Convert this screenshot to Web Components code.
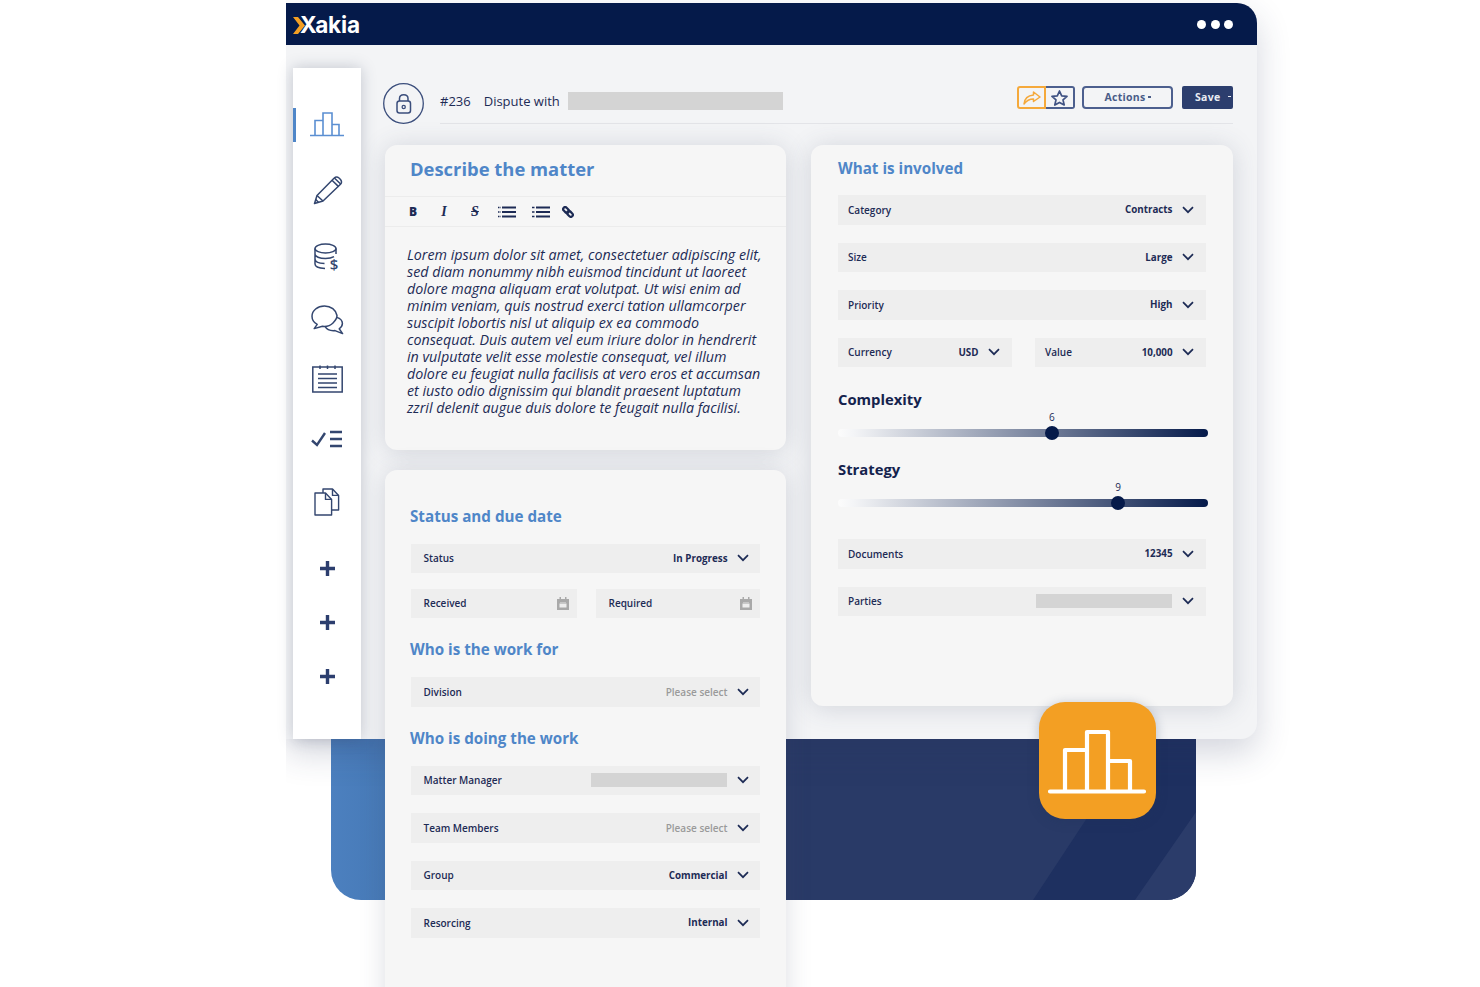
<!DOCTYPE html>
<html lang="en">
<head>
<meta charset="utf-8">
<title>Xakia matter</title>
<style>
  html, body { margin: 0; background: #fff; }
  body { font-family: "Open Sans", "Noto Sans", sans-serif; color: #1d2b55; }
</style>
</head>
<body>
<matter-stage>
  <back-panel></back-panel>
  <app-window>
    <top-bar slot="top"></top-bar>
    <side-nav slot="nav">
      <nav-item active style="margin-top:44px">
        <svg width="34" height="25" viewBox="0 0 34 25" fill="none" stroke="#5b8fd2" stroke-width="1.6"><path d="M0 23.5H34M5 23.5V8.5H13V23.5M13 8.5V1H22V23.5M22 12.5H29V23.5"/></svg>
      </nav-item>
      <nav-item style="margin-top:38px">
        <svg width="30" height="30" viewBox="0 0 30 30" fill="none" stroke="#33466f" stroke-width="1.5" stroke-linejoin="round" style="margin-left:2px"><path d="M1.5 28.5L4 20.5L21 3.2Q23.5 1 26 3L27.5 4.5Q29.5 7 27.5 9.3L10 26Z"/><path d="M4 20.5L10 26M19 5.2L25.6 11.6M21.4 3L27.6 9M2.8 24.4L5.6 27.4"/></svg>
      </nav-item>
      <nav-item style="margin-top:38px">
        <svg width="27" height="32" viewBox="0 0 27 32" fill="none" stroke="#33466f" stroke-width="1.5"><ellipse cx="11.5" cy="5.5" rx="10.5" ry="4.5"/><path d="M1 5.5V21C1 23.5 5 25.2 11 25.5M1 11C1 13.5 5.5 15.5 11.5 15.5C15 15.5 18 14.8 20 13.6M1 16C1 18.4 5 20.3 10.5 20.6M22 5.5V11"/><text x="20" y="26.5" text-anchor="middle" font-family="Open Sans" font-size="15" font-weight="600" fill="#33466f" stroke="none">$</text></svg>
      </nav-item>
      <nav-item style="margin-top:30px">
        <svg width="33" height="30" viewBox="0 0 33 30" fill="none" stroke="#33466f" stroke-width="1.5" stroke-linejoin="round" style="margin-left:1px"><path d="M13.5 1C6.5 1 1 5.6 1 11.2C1 14.6 3 17.6 6.2 19.4L3.2 23.6L11.5 21.3C16 21.8 20 20 22 18C25 15 26 12.5 26 10.5C25 5 20 1 13.5 1Z"/><path d="M25.8 12.4C29.2 13.4 31.4 15.8 31.4 18.6C31.4 20.8 30 22.6 28.2 23.8L31.6 28.6L24 25.6C19.6 26 15.6 24.2 14 21.4"/></svg>
      </nav-item>
      <nav-item style="margin-top:30px">
        <svg width="31" height="28" viewBox="0 0 31 28" fill="none" stroke="#33466f" stroke-width="1.5" style="margin-left:1px"><path d="M.8 2H30.2V27H.8Z" /><path d="M8 .5V4M15.5 .5V4M23 .5V4" /><path d="M6 9H25M6 13.5H25M6 18H25M6 22.5H25" stroke-width="1.7"/></svg>
      </nav-item>
      <nav-item style="margin-top:37px">
        <svg width="32" height="18" viewBox="0 0 32 18" fill="none" stroke="#33466f"><path d="M1 10.5L6 15L14 3" stroke-width="2.4"/><path d="M19 2H31M19 9H31M19 16H31" stroke-width="2.6"/></svg>
      </nav-item>
      <nav-item style="margin-top:40px">
        <svg width="26" height="28" viewBox="0 0 26 28" fill="none" stroke="#33466f" stroke-width="1.4" stroke-linejoin="round"><path d="M1 5H11.5L17.6 11.4V27H1Z"/><path d="M11.5 5V11.4H17.6"/><path d="M9 5V1H18.5L24.6 7.4V22H17.6"/><path d="M18.5 1V7.4H24.6"/></svg>
      </nav-item>
      <nav-item style="margin-top:45px"><plus-mark></plus-mark></nav-item>
      <nav-item style="margin-top:39px"><plus-mark></plus-mark></nav-item>
      <nav-item style="margin-top:39px"><plus-mark></plus-mark></nav-item>
    </side-nav>
    <matter-head slot="head" num="#236" title-text="Dispute with"></matter-head>

    <form-card slot="left" style="height:305px">
      <editor-pane heading="Describe the matter">Lorem ipsum dolor sit amet, consectetuer adipiscing elit,<br>sed diam nonummy nibh euismod tincidunt ut laoreet<br>dolore magna aliquam erat volutpat. Ut wisi enim ad<br>minim veniam, quis nostrud exerci tation ullamcorper<br>suscipit lobortis nisl ut aliquip ex ea commodo<br>consequat. Duis autem vel eum iriure dolor in hendrerit<br>in vulputate velit esse molestie consequat, vel illum<br>dolore eu feugiat nulla facilisis at vero eros et accumsan<br>et iusto odio dignissim qui blandit praesent luptatum<br>zzril delenit augue duis dolore te feugait nulla facilisi.</editor-pane>
    </form-card>
    <form-card slot="left" pad="35.6px 26px 0" style="height:640px;--row-l:12.5px;--row-r:11px">
      <card-title flush>Status and due date</card-title>
      <select-row label="Status">In Progress</select-row>
      <field-pair cols="166px 164px" gap="19px" style="margin-top:15.5px">
        <date-field label="Received"></date-field>
        <date-field label="Required"></date-field>
      </field-pair>
      <card-title>Who is the work for</card-title>
      <select-row label="Division" muted>Please select</select-row>
      <card-title>Who is doing the work</card-title>
      <select-row label="Matter Manager" strong blank></select-row>
      <select-row label="Team Members" strong muted style="margin-top:18px">Please select</select-row>
      <select-row label="Group" strong style="margin-top:18px">Commercial</select-row>
      <select-row label="Resorcing" strong style="margin-top:18px">Internal</select-row>
    </form-card>

    <form-card slot="right" pad="13px 27px 0" style="height:561px;--row-l:10px;--row-r:12px">
      <card-title first>What is involved</card-title>
      <select-row label="Category">Contracts</select-row>
      <select-row label="Size" style="margin-top:18px">Large</select-row>
      <select-row label="Priority" style="margin-top:18px">High</select-row>
      <field-pair cols="174px 171px" gap="23px" style="margin-top:18px">
        <select-row label="Currency">USD</select-row>
        <select-row label="Value">10,000</select-row>
      </field-pair>
      <range-meter heading="Complexity" value="6" pos="57.8" style="margin-top:22px"></range-meter>
      <range-meter heading="Strategy" value="9" pos="75.7" style="margin-top:22px"></range-meter>
      <select-row label="Documents" style="margin-top:32px">12345</select-row>
      <select-row label="Parties" blank style="margin-top:18px"></select-row>
    </form-card>
  </app-window>
  <app-badge></app-badge>
</matter-stage>

<script>
  const CHEVRON = `<svg width="12" height="8" viewBox="0 0 12 8" fill="none" stroke="#1d2b55" stroke-width="1.7"><path d="M1 1.2L6 6.2L11 1.2"/></svg>`;

  // Small helper so every element gets an open shadow root from a string
  class ShadowElement extends HTMLElement {
    connectedCallback() {
      if (!this.shadowRoot) this.attachShadow({ mode: "open" });
      this.shadowRoot.innerHTML = this.render();
    }
  }

  class MatterStage extends ShadowElement {
    render() {
      return `<style>
        :host { display: block; position: relative; height: 987px; overflow: hidden; padding-top: 3px; box-sizing: border-box; }
      </style><slot></slot>`;
    }
  }

  class BackPanel extends ShadowElement {
    render() {
      return `<style>
        :host { display: block; position: absolute; left: 331px; top: 700px; width: 865px; height: 200px;
          border-radius: 0 0 30px 30px; overflow: hidden;
          background: linear-gradient(90deg, #4c80bf 0, #4679b6 7%, #1e3060 50%, #1e3060 100%); }
        svg { display: block; }
      </style>
      <svg width="865" height="200" viewBox="0 0 865 200">
        <path d="M455 39H808L702 200H455Z" fill="#293a67"/>
        <path d="M865 112V200H804Z" fill="#2b3c6a"/>
      </svg>`;
    }
  }

  class AppWindow extends ShadowElement {
    render() {
      return `<style>
        :host { display: block; position: relative; z-index: 1; box-sizing: border-box; margin-left: 286px; width: 971px; height: 736px;
          background: #f3f4f6; border-radius: 0 20px 16px 0; }
        /* shadow falls right and down only, the left edge of the window stays clean */
        :host::before { content: ""; position: absolute; inset: 0; z-index: -1; border-radius: inherit;
          box-shadow: 0 14px 34px rgba(40, 50, 90, .2); clip-path: polygon(0 -3px, 110% -3px, 110% 120%, 0 120%); }
        .body { display: flex; align-items: stretch; height: 694px; }
        .main { width: 850px; margin-left: 22px; padding-top: 38px; }
        .cols { display: grid; grid-template-columns: 401px 422px; column-gap: 25px; margin: 21px 0 0 2px; }
        .col { display: flex; flex-direction: column; gap: 20px; }
      </style>
      <slot name="top"></slot>
      <div class="body">
        <slot name="nav"></slot>
        <div class="main">
          <slot name="head"></slot>
          <div class="cols">
            <div class="col"><slot name="left"></slot></div>
            <div class="col"><slot name="right"></slot></div>
          </div>
        </div>
      </div>`;
    }
  }

  class TopBar extends ShadowElement {
    render() {
      return `<style>
        :host { display: flex; align-items: center; justify-content: space-between; height: 42px; box-sizing: border-box;
          padding: 0 24px 0 7px; background: #051a4a; border-radius: 0 20px 0 0; }
        .logo { display: flex; align-items: center; margin-top: 3px; }
        svg { margin-right: -5px; }
        .name { font: 700 22.6px/1 Inter, sans-serif; color: #fff; letter-spacing: -.2px; }
        .dots { display: flex; gap: 4.5px; }
        .dots i { width: 9px; height: 9px; border-radius: 50%; background: #fff; }
      </style>
      <div class="logo">
        <svg width="12" height="17" viewBox="0 0 12 17"><path d="M0 0H5L12 8.5L5 17H0L6.5 8.5Z" fill="#f39f23"/></svg>
        <span class="name">Xakia</span>
      </div>
      <div class="dots"><i></i><i></i><i></i></div>`;
    }
  }

  class SideNav extends ShadowElement {
    render() {
      return `<style>
        :host { display: block; box-sizing: border-box; width: 68px; margin: 23px 0 0 7px; background: #fff;
          box-shadow: 0 0 14px rgba(50, 60, 90, .26); }
      </style><slot></slot>`;
    }
  }

  class NavItem extends ShadowElement {
    render() {
      return `<style>
        :host { display: flex; justify-content: center; position: relative; }
        :host([active])::before { content: ""; position: absolute; left: 0; top: -4px; bottom: -5px; width: 2.6px; background: #4f86c8; }
        ::slotted(svg) { display: block; }
      </style><slot></slot>`;
    }
  }

  class PlusMark extends ShadowElement {
    render() {
      return `<style>:host { display: block; } svg { display: block; }</style>
      <svg width="15" height="15" viewBox="0 0 15 15" stroke="#2c3e6e" stroke-width="3.4"><path d="M0 7.5H15M7.5 0V15"/></svg>`;
    }
  }

  class MatterHead extends ShadowElement {
    render() {
      return `<style>
        :host { display: flex; height: 41px; font-size: 13px; font-weight: 500; color: #1d2b55; }
        .lock { display: block; flex: none; }
        .bar { flex: 1; display: flex; align-items: center; margin-left: 16px; padding-bottom: 5px; box-sizing: border-box;
          border-bottom: 1.5px solid #e3e4e8; }
        .num { margin-right: 13px; }
        .blank { width: 215px; height: 18px; background: #d4d4d4; margin-left: 8px; }
        .actions { margin-left: auto; display: flex; align-items: center; margin-top: -6px; }
        .btn { box-sizing: border-box; height: 23px; display: flex; align-items: center; justify-content: center; border: 2px solid #4c5f8e; }
        .share { width: 29px; border-color: #f5a93b; border-radius: 3px 0 0 3px; position: relative; z-index: 1; }
        .star { width: 30px; margin-left: -1px; border-radius: 0 3px 3px 0; border-left: 0; }
        .act { width: 91px; margin-left: 7px; border-radius: 4px; font-size: 10.5px; font-weight: 700; color: #4a5c88; letter-spacing: .3px; padding-bottom: 1px; }
        .save { width: 51px; margin-left: 9px; background: #2c3e6e; border-color: #2c3e6e; border-radius: 2px; font-size: 10.5px; font-weight: 700; color: #e9ecf3; letter-spacing: .3px; justify-content: flex-start; padding: 0 0 2px 11px; }
        .tick { width: 3px; height: 1.5px; background: currentColor; margin-left: 2px; }
        .save .tick { margin-left: 7px; }
      </style>
      <svg class="lock" width="41" height="41" viewBox="0 0 41 41" fill="none" stroke="#3b4e7c" stroke-width="1.3">
        <circle cx="20.5" cy="20.5" r="19.8"/>
        <rect x="14" y="18" width="13.5" height="12" rx="2.5" stroke-width="1.5"/>
        <path d="M16.5 18V15.5C16.5 10.5 25 10.5 25 15.5V18" stroke-width="1.5"/>
        <circle cx="20.7" cy="24" r="1.6"/>
      </svg>
      <div class="bar">
        <span class="num">${this.getAttribute("num")}</span>
        <span>${this.getAttribute("title-text")}</span>
        <span class="blank"></span>
        <div class="actions">
          <span class="btn share"><svg width="18" height="14" viewBox="0 0 18 14" fill="none" stroke="#f5a93b" stroke-width="1.5" stroke-linejoin="round"><path d="M10.5 1L17 6L10.5 10.5V8C6.5 8 3.5 9.5 1 13C1.5 8 5 4.5 10.5 4Z"/></svg></span>
          <span class="btn star"><svg width="17" height="16" viewBox="0 0 17 16" fill="none" stroke="#3f5283" stroke-width="1.7" stroke-linejoin="round"><path d="M8.5 1L10.7 5.8L16 6.4L12 9.9L13.2 15L8.5 12.4L3.8 15L5 9.9L1 6.4L6.3 5.8Z"/></svg></span>
          <span class="btn act">Actions<i class="tick"></i></span>
          <span class="btn save">Save<i class="tick"></i></span>
        </div>
      </div>`;
    }
  }

  class FormCard extends ShadowElement {
    render() {
      const pad = this.getAttribute("pad") || "0";
      return `<style>
        :host { display: block; box-sizing: border-box; padding: ${pad}; background: #f6f6f6; border-radius: 12px;
          box-shadow: 0 2px 26px rgba(60, 70, 100, .18); }
      </style><slot></slot>`;
    }
  }

  class CardTitle extends ShadowElement {
    render() {
      return `<style>
        :host { display: block; margin: 21px 0 18px -1px; font-size: 15.2px; line-height: 20px; font-weight: 700; color: #4f86c8; }
        :host([flush]), :host([first]) { margin-top: 0; }
        :host([first]) { margin-bottom: 17px; margin-left: 0; }
      </style><slot></slot>`;
    }
  }

  class SelectRow extends ShadowElement {
    render() {
      const muted = this.hasAttribute("muted");
      const blank = this.hasAttribute("blank");
      return `<style>
        :host { display: flex; align-items: center; box-sizing: border-box; height: 29.5px; padding: 0 var(--row-r, 12px) 0 var(--row-l, 11px); background: #eeeeee;
          font-size: 10px; color: #1d2b55; }
        .label { flex: 1; font-weight: 600; font-size: 10px; }
        .value { margin-right: 9.5px; font-size: ${muted ? 10 : 9.8}px; font-weight: ${muted ? 600 : 700}; color: ${muted ? "#9a9a9a" : "#1d2b55"}; }
        .blank { width: 136px; height: 14px; margin-right: 10.5px; background: #d4d4d4; }
        svg { display: block; flex: none; }
      </style>
      <span class="label">${this.getAttribute("label")}</span>
      ${blank ? `<span class="blank"></span>` : `<span class="value"><slot></slot></span>`}
      ${CHEVRON}`;
    }
  }

  class DateField extends ShadowElement {
    render() {
      return `<style>
        :host { display: flex; align-items: center; justify-content: space-between; box-sizing: border-box; height: 29.5px; padding: 0 8px 0 var(--row-l, 11px);
          background: #eeeeee; font-size: 10px; font-weight: 600; color: #1d2b55; }
        svg { display: block; }
      </style>
      <span>${this.getAttribute("label")}</span>
      <svg width="12" height="13" viewBox="0 0 12 13"><path d="M0 2H2.5V0H4V2H8V0H9.5V2H12V13H0Z" fill="#a9a9a9"/><path d="M2.5 6.5H9.5V10.5H2.5Z" fill="#eeeeee"/><path d="M3 5H9V6.5H3Z" fill="#c6c6c6"/></svg>`;
    }
  }

  class FieldPair extends ShadowElement {
    render() {
      return `<style>
        :host { display: grid; grid-template-columns: ${this.getAttribute("cols")}; column-gap: ${this.getAttribute("gap")}; }
      </style><slot></slot>`;
    }
  }

  class RangeMeter extends ShadowElement {
    render() {
      const pos = this.getAttribute("pos");
      return `<style>
        :host { display: block; margin-right: -2px; color: #14224d; }
        h3 { margin: 0; font-size: 14.8px; line-height: 20px; font-weight: 700; }
        .rail { position: relative; height: 8px; margin: 20px 0 2px; border-radius: 4px;
          background: linear-gradient(90deg, #fcfcfc 0, #f4f5f7 4%, #051a4a 100%); }
        .thumb { position: absolute; top: 50%; width: 14px; height: 14px; margin: -7px 0 0 -7px; border-radius: 50%; background: #051a4a; left: ${pos}%; }
        .val { position: absolute; bottom: 14px; left: ${pos}%; transform: translateX(-50%); font-size: 10px; line-height: 12px; color: #1d2b55; }
      </style>
      <h3>${this.getAttribute("heading")}</h3>
      <div class="rail"><span class="val">${this.getAttribute("value")}</span><span class="thumb"></span></div>`;
    }
  }

  class EditorPane extends ShadowElement {
    render() {
      return `<style>
        :host { display: block; color: #1d2b55; }
        .head { height: 52px; box-sizing: border-box; padding: 12px 0 0 25px; border-bottom: 1.5px solid #ececec;
          font-size: 18.4px; line-height: 23px; font-weight: 700; color: #4f86c8; }
        .tools { display: grid; grid-template-columns: 31px 31px 31px 32px 37px 17px; justify-items: center; align-items: center;
          height: 30px; box-sizing: border-box; padding-left: 12.5px; border-bottom: 1.5px solid #ececec; font-size: 12px; color: #1d2b55; }
        .tools b { font-weight: 800; }
        .tools i { font-family: "Liberation Serif", serif; font-weight: 700; font-size: 14px; }
        .tools s { font-family: "Liberation Serif", serif; font-style: italic; font-weight: 700; font-size: 14px; }
        svg { display: block; }
        .text { margin: 0; padding: 18.5px 0 0 22px; font-size: 14.28px; line-height: 17.1px; font-style: italic; white-space: nowrap; }
      </style>
      <div class="head">${this.getAttribute("heading")}</div>
      <div class="tools">
        <b>B</b><i>I</i><s>S</s>
        <svg width="18" height="12" viewBox="0 0 18 12" stroke="#1d2b55"><path d="M4 1.5H18M4 6H18M4 10.5H18" stroke-width="2"/><path d="M0 1.5H2.5M0 6H2.5M0 10.5H2.5" stroke-width="1.3" stroke-dasharray="1 .5"/></svg>
        <svg width="18" height="12" viewBox="0 0 18 12" stroke="#1d2b55"><path d="M4 1.5H18M4 6H18M4 10.5H18" stroke-width="2"/><path d="M0 1.5H2.5M0 6H2.5M0 10.5H2.5" stroke-width="1.6"/></svg>
        <svg width="12" height="12" viewBox="0 0 12 12" fill="none" stroke="#1d2b55" stroke-width="2.2"><g transform="rotate(45 6 6)"><rect x="0" y="4" width="6.5" height="4" rx="2"/><rect x="5.5" y="4" width="6.5" height="4" rx="2"/></g></svg>
      </div>
      <p class="text"><slot></slot></p>`;
    }
  }

  class AppBadge extends ShadowElement {
    render() {
      return `<style>
        :host { display: block; position: absolute; z-index: 2; left: 1039px; top: 702px; width: 117px; height: 117px; border-radius: 26px;
          background: #f39f23; box-shadow: 0 2px 12px rgba(30, 50, 90, .28); }
        svg { display: block; }
      </style>
      <svg width="117" height="117" viewBox="0 0 117 117" fill="none" stroke="#fff" stroke-width="4.2" stroke-linecap="round" stroke-linejoin="round">
        <path d="M11 89.5H105M26 89.5V48H48V89.5M48 48V30H69V89.5M69 59H91V89.5"/>
      </svg>`;
    }
  }

  customElements.define("matter-stage", MatterStage);
  customElements.define("back-panel", BackPanel);
  customElements.define("app-window", AppWindow);
  customElements.define("top-bar", TopBar);
  customElements.define("side-nav", SideNav);
  customElements.define("nav-item", NavItem);
  customElements.define("plus-mark", PlusMark);
  customElements.define("matter-head", MatterHead);
  customElements.define("form-card", FormCard);
  customElements.define("card-title", CardTitle);
  customElements.define("select-row", SelectRow);
  customElements.define("date-field", DateField);
  customElements.define("field-pair", FieldPair);
  customElements.define("range-meter", RangeMeter);
  customElements.define("editor-pane", EditorPane);
  customElements.define("app-badge", AppBadge);
</script>
</body>
</html>
